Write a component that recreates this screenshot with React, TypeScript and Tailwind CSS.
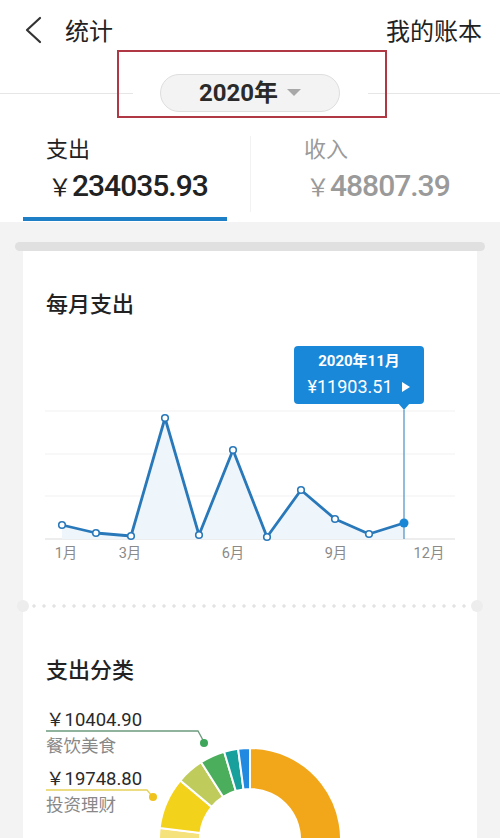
import React from "react";

const CJK = "'Noto Sans CJK SC', sans-serif";
const NUM = "Roboto, 'Noto Sans CJK SC', sans-serif";

const pts: [number, number][] = [
  [62, 525], [96, 533], [131, 536], [165, 418], [199, 535], [233, 450],
  [267, 537], [301, 490], [335, 519], [369, 534], [404, 523],
];

function LineChart() {
  const ox = 23, oy = 330;
  const p = pts.map(([x, y]) => [x - ox, y - oy] as [number, number]);
  const base = 539 - oy;
  const line = p.map(([x, y], i) => `${i ? "L" : "M"}${x} ${y}`).join(" ");
  const area = `${line} L${p[p.length - 1][0]} ${base} L${p[0][0]} ${base} Z`;
  const labels: [string, number][] = [["1月", 66], ["3月", 130], ["6月", 233], ["9月", 336], ["12月", 429]];
  return (
    <div className="relative mt-[17px] h-[245px]">
      <svg width="455" height="245" className="block">
        {[411, 454, 496].map((y) => (
          <line key={y} x1={45 - ox} x2={455 - ox} y1={y - oy} y2={y - oy} stroke="#f1f1f1" strokeWidth="1" />
        ))}
        <line x1={45 - ox} x2={455 - ox} y1={base} y2={base} stroke="#dcdcdc" strokeWidth="1.2" />
        <path d={area} fill="#eef5fb" />
        <line x1={404 - ox} x2={404 - ox} y1={410 - oy} y2={base} stroke="#4a8fc4" strokeWidth="1.2" />
        <path d={line} fill="none" stroke="#2878ba" strokeWidth="2.8" strokeLinejoin="round" />
        {p.slice(0, -1).map(([x, y], i) => (
          <circle key={i} cx={x} cy={y} r="3.3" fill="#fff" stroke="#2878ba" strokeWidth="1.6" />
        ))}
        <circle cx={p[p.length - 1][0]} cy={p[p.length - 1][1]} r="4.5" fill="#1a86d6" />
        {labels.map(([t, x]) => (
          <text key={t} x={x - ox} y={558 - oy} textAnchor="middle" fontSize="14.5" fill="#8a8a8a" fontFamily={NUM}>
            {t}
          </text>
        ))}
      </svg>
      <div className="absolute left-[271px] top-[16px] w-[130px] h-[58px] rounded-[4px] bg-[#1a88d8] text-white flex flex-col items-center justify-center">
        <div className="text-[15px] font-bold leading-none" style={{ fontFamily: NUM }}>2020年11月</div>
        <div className="mt-[9px] flex items-center text-[18px] leading-none" style={{ fontFamily: NUM }}>
          <span>¥11903.51</span>
          <svg width="10" height="10" viewBox="0 0 10 10" className="ml-[8px]">
            <path d="M1 0 L9 5 L1 10 Z" fill="#fff" />
          </svg>
        </div>
        <svg width="12" height="7" className="absolute left-[104px] -bottom-[6px]" viewBox="0 0 12 7">
          <path d="M0 0 L12 0 L6 7 Z" fill="#1a88d8" />
        </svg>
      </div>
    </div>
  );
}

function arcPath(cx: number, cy: number, R: number, r: number, a1: number, a2: number) {
  const rad = (a: number) => (a * Math.PI) / 180;
  const pt = (a: number, rr: number) => [cx + rr * Math.sin(rad(a)), cy - rr * Math.cos(rad(a))];
  const large = a2 - a1 > 180 ? 1 : 0;
  const [x1, y1] = pt(a1, R);
  const [x2, y2] = pt(a2, R);
  const [x3, y3] = pt(a2, r);
  const [x4, y4] = pt(a1, r);
  return `M${x1} ${y1} A${R} ${R} 0 ${large} 1 ${x2} ${y2} L${x3} ${y3} A${r} ${r} 0 ${large} 0 ${x4} ${y4} Z`;
}

function Donut() {
  const ox = 23, oy = 700;
  const cx = 250 - ox, cy = 850 - oy;
  const segs: [number, number, string][] = [
    [-150, -100, "#e9e4a8"],
    [-100, -83, "#f6e27a"],
    [-83, -50, "#f3d21c"],
    [-50, -32.5, "#bfcc5c"],
    [-32.5, -16.5, "#4aae5c"],
    [-16.5, -7.5, "#17a09c"],
    [-7.5, 0, "#2289e0"],
    [0, 210, "#f2a71a"],
  ];
  return (
    <svg width="455" height="240" className="block mt-[10px]">
      {segs.map(([a1, a2, c], i) => (
        <path key={i} d={arcPath(cx, cy, 91, 50, a1, a2)} fill={c} stroke="#fff" strokeWidth="2" />
      ))}
      <text x={46 - ox} y={737 - oy} fontSize="18.5" fill="#2a2a2a" fontFamily={NUM}>￥10404.90</text>
      <path d={`M${46 - ox} ${742 - oy} L${198 - ox} ${742 - oy} L${204 - ox} ${753 - oy}`} fill="none" stroke="#6b9a7c" strokeWidth="1.3" />
      <circle cx={204 - ox} cy={754 - oy} r="4" fill="#3ea65a" />
      <text x={46 - ox} y={763 - oy} fontSize="17.5" fill="#888" fontFamily={CJK}>餐饮美食</text>
      <text x={46 - ox} y={796 - oy} fontSize="18.5" fill="#2a2a2a" fontFamily={NUM}>￥19748.80</text>
      <path d={`M${46 - ox} ${801 - oy} L${147 - ox} ${801 - oy} L${152 - ox} ${807 - oy}`} fill="none" stroke="#e6d25a" strokeWidth="1.3" />
      <circle cx={153 - ox} cy={808 - oy} r="4" fill="#f0c21d" />
      <text x={46 - ox} y={822 - oy} fontSize="17.5" fill="#888" fontFamily={CJK}>投资理财</text>
    </svg>
  );
}

export default function App() {
  return (
    <div className="w-[500px] h-[838px] overflow-hidden bg-white flex flex-col" style={{ fontFamily: NUM }}>
      <div className="h-[60px] shrink-0 flex items-center justify-between pl-[24px] pr-[18px]">
        <div className="flex items-center">
          <svg width="18" height="28" viewBox="0 0 18 28">
            <path d="M16 2 L3 14 L16 26" fill="none" stroke="#333" strokeWidth="2.2" strokeLinecap="round" strokeLinejoin="round" />
          </svg>
          <span className="ml-[23px] text-[24px] leading-none text-[#222]" style={{ fontFamily: CJK }}>统计</span>
        </div>
        <span className="text-[24px] leading-none text-[#222]" style={{ fontFamily: CJK }}>我的账本</span>
      </div>

      <div className="relative h-[66px] shrink-0 flex items-center">
        <div className="w-[133px] h-px bg-[#e6e6e6]" />
        <div className="ml-[27px] w-[180px] h-[38px] rounded-full bg-[#f3f3f3] border border-[#dedede] flex items-center justify-center">
          <span className="text-[24px] font-bold leading-none text-[#2a2a2a]">2020年</span>
          <svg width="14" height="8" viewBox="0 0 14 8" className="ml-[9px]">
            <path d="M0 0 L14 0 L7 7 Z" fill="#a8a8a8" />
          </svg>
        </div>
        <div className="ml-[28px] flex-1 h-px bg-[#e6e6e6]" />
        <div className="absolute left-[117px] top-[-10px] w-[270px] h-[68px] border-2 border-[#b03744]" />
      </div>

      <div className="h-[96px] shrink-0 flex">
        <div className="w-[250px] flex flex-col">
          <div className="pt-[10px] pl-[46px] text-[22px] leading-none text-[#222]" style={{ fontFamily: CJK }}>支出</div>
          <div className="mt-[13px] pl-[48px] flex items-baseline leading-none text-[#222]">
            <span className="text-[24px]" style={{ fontFamily: CJK }}>￥</span>
            <span className="text-[30px] font-medium tracking-[-1px]">234035.93</span>
          </div>
          <div className="mt-auto mb-px mx-[23px] h-[4px] bg-[#1f7fc6]" />
        </div>
        <div className="flex-1 flex">
          <div className="w-px my-[10px] bg-[#f2f2f2]" />
          <div className="flex flex-col pl-[53px]">
            <div className="pt-[10px] text-[22px] leading-none text-[#9a9a9a]" style={{ fontFamily: CJK }}>收入</div>
            <div className="mt-[13px] pl-[2px] flex items-baseline leading-none text-[#9a9a9a]">
              <span className="text-[24px]" style={{ fontFamily: CJK }}>￥</span>
              <span className="text-[30px] font-medium tracking-[-1px]">48807.39</span>
            </div>
          </div>
        </div>
      </div>

      <div className="flex-1 bg-[#f3f3f3] pt-[20px] flex flex-col">
        <div className="mx-[15px] h-[9px] rounded-full bg-[#e0e0e0] shrink-0" />
        <div className="mx-[23px] bg-white flex-1 flex flex-col">
          <div className="h-[355px] shrink-0 flex flex-col">
            <div className="pt-[40px] pl-[23px] text-[22px] leading-none font-medium text-[#222]" style={{ fontFamily: CJK }}>每月支出</div>
            <LineChart />
          </div>
          <div className="relative h-0">
            <div className="absolute left-[6px] right-[6px] -top-[2px] h-[4px] bg-[radial-gradient(circle,#e3e3e3_1.4px,transparent_1.9px)] bg-[length:10px_4px] bg-repeat-x" />
            <div className="absolute -left-[6px] -top-[6px] w-[12px] h-[12px] rounded-full bg-[#ededed]" />
            <div className="absolute -right-[6px] -top-[6px] w-[12px] h-[12px] rounded-full bg-[#ededed]" />
          </div>
          <div className="flex flex-col">
            <div className="pt-[51px] pl-[23px] text-[22px] leading-none font-medium text-[#222]" style={{ fontFamily: CJK }}>支出分类</div>
            <Donut />
          </div>
        </div>
      </div>
    </div>
  );
}
